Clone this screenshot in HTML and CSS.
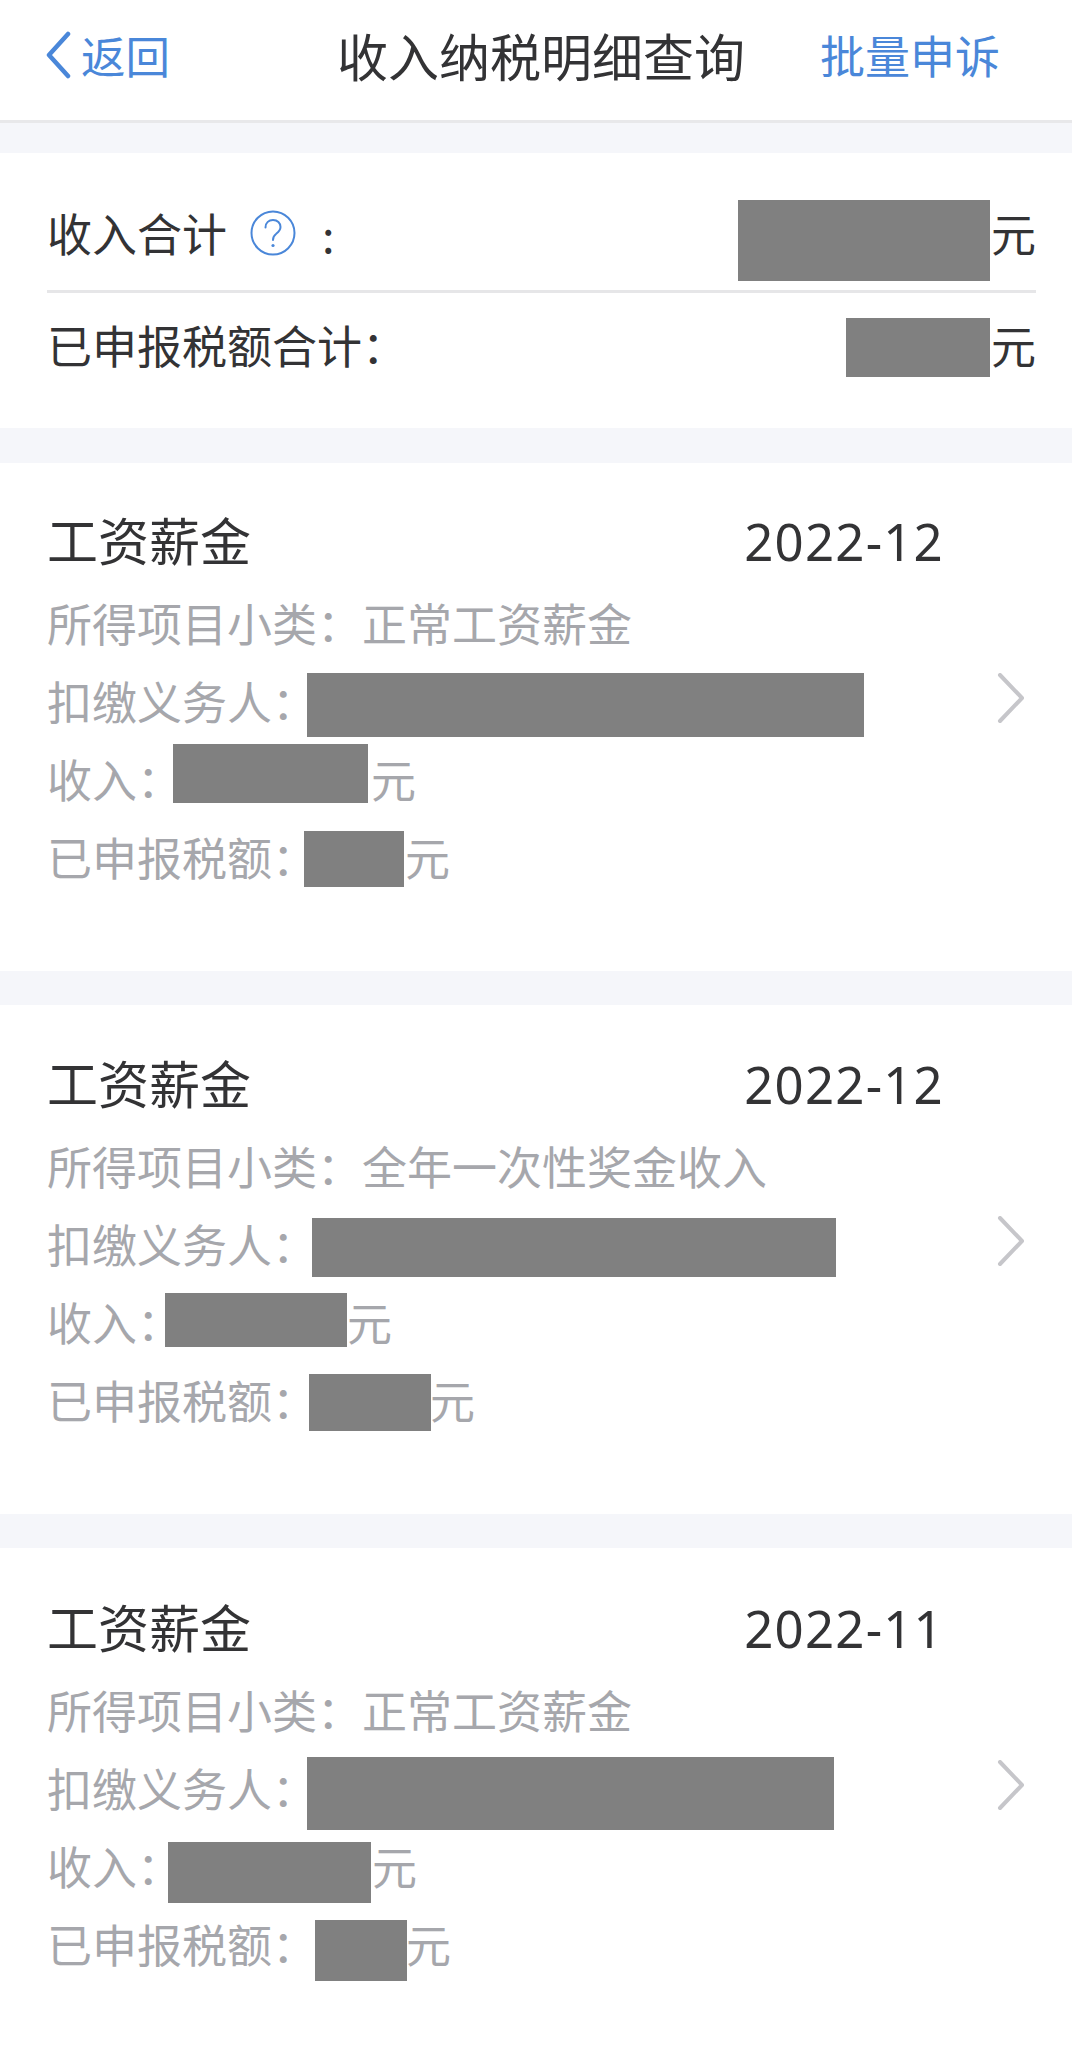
FILE: index.html
```html
<!DOCTYPE html>
<html lang="zh-CN">
<head>
<meta charset="utf-8">
<title>收入纳税明细查询</title>
<link rel="stylesheet" href="styles.css">
</head>
<body>
<header class="nav">
  <div class="back">
    <svg class="back-icon" viewBox="0 0 28 48" width="28" height="48"><path d="M24 3 L5 24 L24 45" fill="none" stroke="#4a87d9" stroke-width="4.5" stroke-linecap="round" stroke-linejoin="round"/></svg>
    <span>返回</span>
  </div>
  <h1 class="title">收入纳税明细查询</h1>
  <div class="batch">批量申诉</div>
</header>

<section class="summary">
  <div class="sum-row sum-row-first">
    <span>收入合计</span>
    <svg class="help" viewBox="0 0 46 46" width="46" height="46"><circle cx="23" cy="23" r="21.5" fill="none" stroke="#4a87d9" stroke-width="2"/><path d="M15.5 17.5 C15.5 12.5 19 10 23 10 C27.5 10 30.5 13 30.5 17 C30.5 20.5 28.5 22 26 24 C24 25.5 23 26.8 23 30" fill="none" stroke="#4a87d9" stroke-width="2" stroke-linecap="round"/><circle cx="23" cy="35.5" r="1.6" fill="#4a87d9"/></svg>
    <span class="sum-colon">:</span>
    <span class="redact r-s1"></span><span class="yuan">元</span>
  </div>
  <div class="sum-row sum-row-second">
    <span>已申报税额合计：</span>
    <span class="redact r-s2"></span><span class="yuan">元</span>
  </div>
</section>

<article class="card card-a">
  <div class="card-head"><span>工资薪金</span><span class="date">2022-12</span></div>
  <div class="row"><span>所得项目小类：</span><span>正常工资薪金</span></div>
  <div class="row"><span>扣缴义务人：</span><span class="redact r-a2"></span>
    <svg class="chev" viewBox="0 0 28 50" width="28" height="50"><path d="M3 2 L25 25 L3 48" fill="none" stroke="#c6c6ca" stroke-width="4" stroke-linecap="round" stroke-linejoin="round"/></svg></div>
  <div class="row"><span>收入：</span><span class="redact r-a3"></span><span>元</span></div>
  <div class="row"><span>已申报税额：</span><span class="redact r-a4"></span><span>元</span></div>
</article>

<article class="card card-b">
  <div class="card-head"><span>工资薪金</span><span class="date">2022-12</span></div>
  <div class="row"><span>所得项目小类：</span><span>全年一次性奖金收入</span></div>
  <div class="row"><span>扣缴义务人：</span><span class="redact r-b2"></span>
    <svg class="chev" viewBox="0 0 28 50" width="28" height="50"><path d="M3 2 L25 25 L3 48" fill="none" stroke="#c6c6ca" stroke-width="4" stroke-linecap="round" stroke-linejoin="round"/></svg></div>
  <div class="row"><span>收入：</span><span class="redact r-b3"></span><span>元</span></div>
  <div class="row"><span>已申报税额：</span><span class="redact r-b4"></span><span>元</span></div>
</article>

<article class="card card-c">
  <div class="card-head"><span>工资薪金</span><span class="date">2022-11</span></div>
  <div class="row"><span>所得项目小类：</span><span>正常工资薪金</span></div>
  <div class="row"><span>扣缴义务人：</span><span class="redact r-c2"></span>
    <svg class="chev" viewBox="0 0 28 50" width="28" height="50"><path d="M3 2 L25 25 L3 48" fill="none" stroke="#c6c6ca" stroke-width="4" stroke-linecap="round" stroke-linejoin="round"/></svg></div>
  <div class="row"><span>收入：</span><span class="redact r-c3"></span><span>元</span></div>
  <div class="row"><span>已申报税额：</span><span class="redact r-c4"></span><span>元</span></div>
</article>
</body>
</html>
```
FILE: styles.css
```css
* { box-sizing: border-box; margin: 0; padding: 0; }
html, body { background: #f5f6fa; }
body {
  width: 1072px;
  height: 2055px;
  overflow: hidden;
  font-family: "Noto Sans CJK SC", "Noto Sans", sans-serif;
  color: #333335;
}

.nav {
  height: 123px;
  background: #fff;
  border-bottom: 3px solid #e8e8ea;
  display: flex;
  align-items: center;
  padding-left: 44px;
  padding-bottom: 10px;
}
.back {
  display: flex;
  align-items: center;
  flex: none;
  width: 128px;
  gap: 9px;
  font-size: 44.5px;
  line-height: 60px;
  color: #4a87d9;
  white-space: nowrap;
}
.back-icon { flex: none; }
.title {
  margin-left: 165px;
  font-size: 51px;
  font-weight: 400;
  line-height: 70px;
  white-space: nowrap;
}
.batch {
  margin-left: 75px;
  font-size: 45px;
  line-height: 60px;
  color: #4a87d9;
  white-space: nowrap;
}

.summary {
  margin-top: 30px;
  height: 275px;
  background: #fff;
  padding: 0 36px 0 47px;
}
.sum-row {
  display: flex;
  align-items: center;
  font-size: 45px;
  white-space: nowrap;
}
.sum-row > span:not(.redact),
.card-head > span,
.row > span:not(.redact) { margin-bottom: 6px; }
.sum-row-first {
  height: 140px;
  border-bottom: 3px solid #e6e6e8;
  padding-top: 27px;
}
.sum-row-second {
  height: 104px;
}
.sum-row-second > span:not(.redact) { margin-bottom: 2px; }
.help { margin-left: 23px; margin-bottom: 4px; flex: none; }
.sum-colon { margin-left: 26px; padding-top: 3px; }
.yuan { margin-left: 1px; }

.card {
  margin-top: 34px;
  height: 509px;
  background: #fff;
  padding: 40px 48px 0 47px;
}
.summary + .card { margin-top: 35px; height: 508px; }
.card-b { padding-top: 41px; }
.card-c { padding-top: 42px; height: 507px; }

.card-head {
  height: 78px;
  margin-bottom: 5px;
  padding-right: 80px;
  display: flex;
  align-items: center;
  justify-content: space-between;
  font-size: 51px;
}
.card-head > .date {
  margin-bottom: 2px;
  font-family: "Noto Sans", sans-serif;
  font-size: 51px;
  letter-spacing: 1.2px;
}
.row {
  height: 78px;
  display: flex;
  align-items: center;
  font-size: 45px;
  color: #a6a7ac;
  white-space: nowrap;
}
.chev { margin-left: auto; margin-right: -1px; flex: none; margin-top: -10px; }

.redact { display: block; flex: none; background: #808080; }
.r-s1 { width: 252px; height: 81px; margin-left: auto; margin-top: 10px; }
.r-s2 { width: 144px; height: 59px; margin-left: auto; margin-top: 4px; }

.r-a2 { width: 557px; height: 64px; margin-left: -10px; margin-top: 4px; }
.r-a3 { width: 195px; height: 59px; margin-left: -9px; margin-top: -15px; margin-right: 3px; }
.r-a4 { width: 100px; height: 56px; margin-left: -13px; margin-right: 1px; }

.r-b2 { width: 524px; height: 59px; margin-left: -5px; margin-top: 2px; }
.r-b3 { width: 182px; height: 54px; margin-left: -17px; margin-top: -8px; }
.r-b4 { width: 122px; height: 57px; margin-left: -8px; margin-right: -1px; }

.r-c2 { width: 527px; height: 73px; margin-left: -10px; margin-top: 6px; }
.r-c3 { width: 203px; height: 61px; margin-left: -14px; margin-top: 8px; margin-right: 1px; }
.r-c4 { width: 92px; height: 61px; margin-left: -2px; margin-top: 8px; margin-right: -1px; }
```
